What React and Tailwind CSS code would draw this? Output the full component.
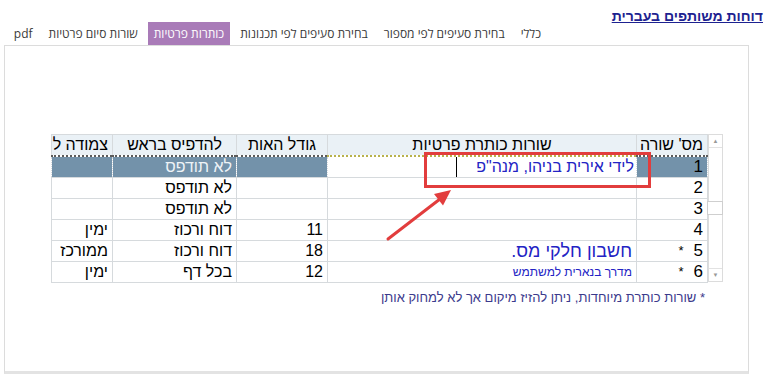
import React from 'react'

const tabs = [
  { label: 'כללי' },
  { label: 'בחירת סעיפים לפי מספור' },
  { label: 'בחירת סעיפים לפי תכנונות' },
  { label: 'כותרות פרטיות', active: true },
  { label: 'שורות סיום פרטיות' },
  { label: 'pdf' },
]

const rows = [
  { n: '1', size: '', print: 'לא תודפס', align: '', selected: true },
  { n: '2', size: '', print: 'לא תודפס', align: '' },
  { n: '3', size: '', print: 'לא תודפס', align: '' },
  { n: '4', size: '11', print: 'דוח ורכוז', align: 'ימין' },
  { n: '5', star: true, size: '18', print: 'דוח ורכוז', align: 'ממורכז', text: 'חשבון חלקי מס.', big: true },
  { n: '6', star: true, size: '12', print: 'בכל דף', align: 'ימין', text: 'מדרך בנארית למשתמש', small: true },
]

function Annotation() {
  return (
    <svg className="absolute left-0 top-0 pointer-events-none" width="768" height="377">
      <rect x="425.5" y="153.5" width="224" height="33" fill="none" stroke="#e23d3d" strokeWidth="3" />
      <line x1="388" y1="239" x2="440" y2="199" stroke="#e23d3d" strokeWidth="3" strokeLinecap="round" />
      <polygon points="451,190 443,205.5 434,194" fill="#e23d3d" />
    </svg>
  )
}

function Scrollbar() {
  return (
    <div className="relative w-[15px] h-[148px] border border-[#dcdcdc] bg-white flex flex-col justify-between">
      <div className="h-[13px] border-b border-[#e2e2e2] flex items-center justify-center text-[6px] text-[#999]">▲</div>
      <div className="h-[13px] border-t border-[#e2e2e2] flex items-center justify-center text-[6px] text-[#999]">▼</div>
      <div className="absolute top-[66px] -left-[2px] h-[14px] w-[16px] border border-[#cfcfcf] bg-white" />
    </div>
  )
}

function ReportTable() {
  const cell = 'h-[21px] border border-[#d6dadd] px-[4px] leading-[20px] whitespace-nowrap overflow-hidden'
  return (
    <table className="w-[656px] table-fixed border-collapse text-[16px] text-black" style={{ fontFamily: '"Liberation Sans", Arial, sans-serif' }}>
      <colgroup>
        <col className="w-[71px]" />
        <col className="w-[309px]" />
        <col className="w-[91px]" />
        <col className="w-[124px]" />
        <col className="w-[61px]" />
      </colgroup>
      <thead>
        <tr className="bg-[#eaf1f6]">
          <th className={`${cell} font-normal text-right`}>מס' שורה</th>
          <th className={`${cell} font-normal text-center`}>שורות כותרת פרטיות</th>
          <th className={`${cell} font-normal text-center`}>גודל האות</th>
          <th className={`${cell} font-normal text-center`}>להדפיס בראש</th>
          <th className={`${cell} font-normal text-center px-[1px]`}>צמודה ל</th>
        </tr>
      </thead>
      <tbody>
        {rows.map((r) => {
          const bg = r.selected ? 'bg-[#7392aa]' : 'bg-white'
          const top = r.selected ? 'border-t-2 border-t-[#5b5b5b] border-dotted' : ''
          return (
            <tr key={r.n}>
              <td className={`${cell} ${bg} ${top} text-right text-[17px]`}>
                <div className="flex gap-[10px] items-center">
                  <span>{r.n}</span>
                  {r.star && <span className="text-[13px] leading-[12px]">*</span>}
                </div>
              </td>
              {r.selected ? (
                <td className="h-[21px] p-0 bg-white border-t-2 border-t-[#b8b24c] border-dotted border-b border-b-[#b8b24c]">
                  <div className="w-[180px] h-[20px] border-l border-l-black border-solid text-right pr-[2px] text-[#2323c4] leading-[20px] whitespace-nowrap">
                    לידי אירית בניהו, מנה"פ
                  </div>
                </td>
              ) : (
                <td className={`${cell} ${bg} text-right text-[#2323c4] ${r.big ? 'text-[18px]' : ''} ${r.small ? 'text-[12px]' : ''}`}>
                  {r.text}
                </td>
              )}
              <td className={`${cell} ${bg} ${top} text-right`}>{r.size}</td>
              <td className={`${cell} ${bg} ${top} text-right ${r.selected ? 'text-[#eef3f7]' : ''}`}>{r.print}</td>
              <td className={`${cell} ${bg} ${top} text-right`}>{r.align}</td>
            </tr>
          )
        })}
      </tbody>
    </table>
  )
}

export default function App() {
  return (
    <div dir="rtl" className="relative w-[768px] h-[377px] bg-white overflow-hidden" style={{ fontFamily: '"Open Sans", "Liberation Sans", Arial, sans-serif' }}>
      <div className="h-[22px] pr-[5px] pt-[3px]">
        <span className="text-[14px] font-bold underline text-[#1d2290] leading-[16px]" style={{ fontFamily: '"Liberation Sans", Arial, sans-serif' }}>
          דוחות משותפים בעברית
        </span>
      </div>
      <div className="h-[23px] flex items-stretch pr-[221px] gap-[4px]">
        {tabs.map((t) => (
          <div
            key={t.label}
            className={`px-[6px] flex items-center text-[12px] ${t.active ? 'bg-[#a97bb8] text-white' : 'text-[#3a3a3a]'}`}
          >
            {t.label}
          </div>
        ))}
      </div>
      <div className="ml-[4px] mr-[19px] h-[329px] border border-[#dcdcdc] border-b-[3px] border-b-[#e3e3e3] pt-[88px] pr-[25px]">
        <div className="flex items-start">
          <Scrollbar />
          <ReportTable />
        </div>
        <div className="mt-[5px] pr-[18px] text-[13px] text-[#3b3a8c]" style={{ fontFamily: '"Liberation Sans", Arial, sans-serif' }}>
          * שורות כותרת מיוחדות, ניתן להזיז מיקום אך לא למחוק אותן
        </div>
      </div>
      <Annotation />
    </div>
  )
}
